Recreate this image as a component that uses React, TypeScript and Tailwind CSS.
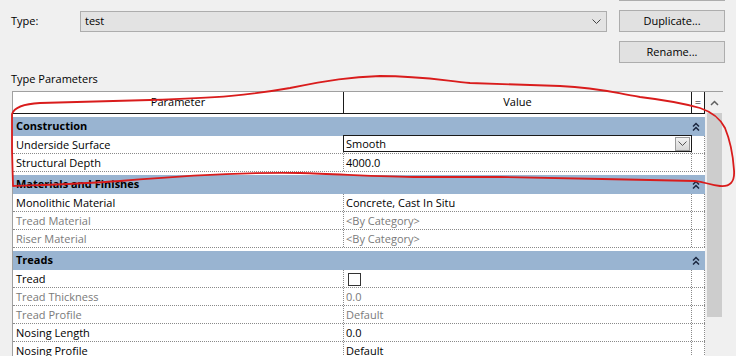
import React from "react";

const Chevron = ({ color = "#333", w = 9, h = 5 }: { color?: string; w?: number; h?: number }) => (
  <svg width={w} height={h} viewBox={`0 0 ${w} ${h}`}>
    <polyline points={`0.5,0.5 ${w / 2},${h - 0.5} ${w - 0.5},0.5`} fill="none" stroke={color} strokeWidth="1" />
  </svg>
);

const DoubleUp = () => (
  <svg width="8" height="9" viewBox="0 0 8 9">
    <polyline points="1,4.5 4,1.5 7,4.5" fill="none" stroke="#1b2740" strokeWidth="1.5" />
    <polyline points="1,8.5 4,5.5 7,8.5" fill="none" stroke="#1b2740" strokeWidth="1.5" />
  </svg>
);

type Row = { name: string; value?: string; dim?: boolean; kind?: "select" | "check" };
type Group = { title: string; rows: Row[] };

const groups: Group[] = [
  {
    title: "Construction",
    rows: [
      { name: "Underside Surface", value: "Smooth", kind: "select" },
      { name: "Structural Depth", value: "4000.0" },
    ],
  },
  {
    title: "Materials and Finishes",
    rows: [
      { name: "Monolithic Material", value: "Concrete, Cast In Situ" },
      { name: "Tread Material", value: "<By Category>", dim: true },
      { name: "Riser Material", value: "<By Category>", dim: true },
    ],
  },
  {
    title: "Treads",
    rows: [
      { name: "Tread", kind: "check" },
      { name: "Tread Thickness", value: "0.0", dim: true },
      { name: "Tread Profile", value: "Default", dim: true },
      { name: "Nosing Length", value: "0.0" },
      { name: "Nosing Profile", value: "Default" },
    ],
  },
];

function DataRow({ r }: { r: Row }) {
  const txt = r.dim ? "text-[#7a7a7a]" : "text-black";
  return (
    <div className="flex h-[18px] border-b border-dotted border-[#8a8a8a] bg-white">
      <div className={`w-[331px] shrink-0 border-r border-dotted border-[#8a8a8a] pl-[3px] leading-[17px] ${txt}`}>{r.name}</div>
      <div className={`w-[348px] shrink-0 border-r border-dotted border-[#8a8a8a] leading-[17px] ${txt}`}>
        {r.kind === "select" ? (
          <div className="-mt-px -ml-px flex h-[17px] w-[349px] items-center border border-[#1a1a1a] bg-white">
            <span className="flex-1 pl-[2px] leading-[15px]">{r.value}</span>
            <div className="mr-px flex h-[14px] w-[15px] items-center justify-center border border-[#9a9a9a] bg-gradient-to-b from-[#f2f2f2] to-[#d6d6d6]">
              <Chevron color="#555" w={9} h={5} />
            </div>
          </div>
        ) : r.kind === "check" ? (
          <div className="ml-[4px] mt-[3px] h-[13px] w-[13px] border border-[#333] bg-white" />
        ) : (
          <span className="pl-[2px]">{r.value}</span>
        )}
      </div>
      <div className="w-[13px] shrink-0 border-r border-dotted border-[#8a8a8a]" />
    </div>
  );
}

export default function App() {
  return (
    <div className="relative h-[356px] w-[736px] overflow-hidden bg-[#f0f0f0] font-['Open_Sans','Noto_Sans',sans-serif] text-[11px] text-black">
      <div className="ml-[619px] h-[1px] w-[106px] bg-[#adadad]" />
      <div className="mt-[9px] flex h-[22px] items-center">
        <div className="w-[80px] pl-[11px]">Type:</div>
        <div className="flex h-[21px] w-[527px] items-center border border-[#adadad] bg-[#e3e3e3] pl-[4px] pr-[5px]">
          <span className="flex-1">test</span>
          <Chevron color="#444" />
        </div>
        <button className="ml-[12px] h-[22px] w-[106px] border border-[#adadad] bg-[#e1e1e1] text-[11px]">Duplicate...</button>
      </div>
      <div className="mt-[9px] flex h-[22px]">
        <button className="ml-[619px] h-[22px] w-[106px] border border-[#adadad] bg-[#e1e1e1] text-[11px]">Rename...</button>
      </div>
      <div className="mt-[8px] h-[16px] pl-[11px] leading-[16px]">Type Parameters</div>
      <div className="mt-[4px] ml-[12px] flex w-[711px] border-t border-[#a0a0a0]">
        <div className="w-[693px] border-l border-[#a0a0a0] bg-white">
          <div className="flex h-[22px] border-b border-[#1a1a1a] bg-white">
            <div className="flex w-[331px] items-center justify-center border-r border-[#1a1a1a]">Parameter</div>
            <div className="flex w-[348px] items-center justify-center border-r border-[#1a1a1a]">Value</div>
            <div className="flex w-[13px] items-center justify-center border-r border-[#1a1a1a]">=</div>
          </div>
          {groups.map((g) => (
            <div key={g.title}>
              <div className="h-[3px] bg-white" />
              <div className="flex h-[19px] items-center bg-[#99b4d1] pl-[3px] font-bold">
                <span className="flex-1">{g.title}</span>
                <div className="mr-[5px] flex items-center">
                  <DoubleUp />
                </div>
              </div>
              {g.rows.map((r) => (
                <DataRow key={r.name} r={r} />
              ))}
            </div>
          ))}
        </div>
        <div className="flex w-[18px] flex-col bg-[#f0f0f0]">
          <div className="flex h-[21px] items-center justify-center pl-[1px]">
            <svg width="9" height="6" viewBox="0 0 9 6">
              <polyline points="1,5 4.5,1.5 8,5" fill="none" stroke="#606060" strokeWidth="1.5" />
            </svg>
          </div>
          <div className="ml-[2px] h-[204px] w-[15px] bg-[#cdcdcd]" />
        </div>
      </div>
      <svg className="pointer-events-none absolute left-0 top-0" width="736" height="356" viewBox="0 0 736 356">
        <path
          d="M 12 150 L 12 114 C 14 108, 22 104, 40 103 L 150 100 C 220 98, 250 95, 290 88 C 330 80, 350 77, 380 76 C 420 76, 440 80, 470 83 L 560 86 C 600 88, 610 92, 640 97 C 665 100, 682 103, 700 108 C 712 112, 720 118, 725 128 C 730 140, 733 155, 734 170 C 735 182, 730 187, 720 186 C 710 185, 705 182, 695 181 L 650 180 C 600 179, 560 178, 500 177 L 420 177 C 380 177, 340 174, 300 173 C 250 172, 180 176, 120 181 C 80 184, 40 185, 13 186 L 12 150"
          fill="none"
          stroke="#d91c1c"
          strokeWidth="1.8"
          strokeLinejoin="round"
          strokeLinecap="round"
        />
      </svg>
    </div>
  );
}
